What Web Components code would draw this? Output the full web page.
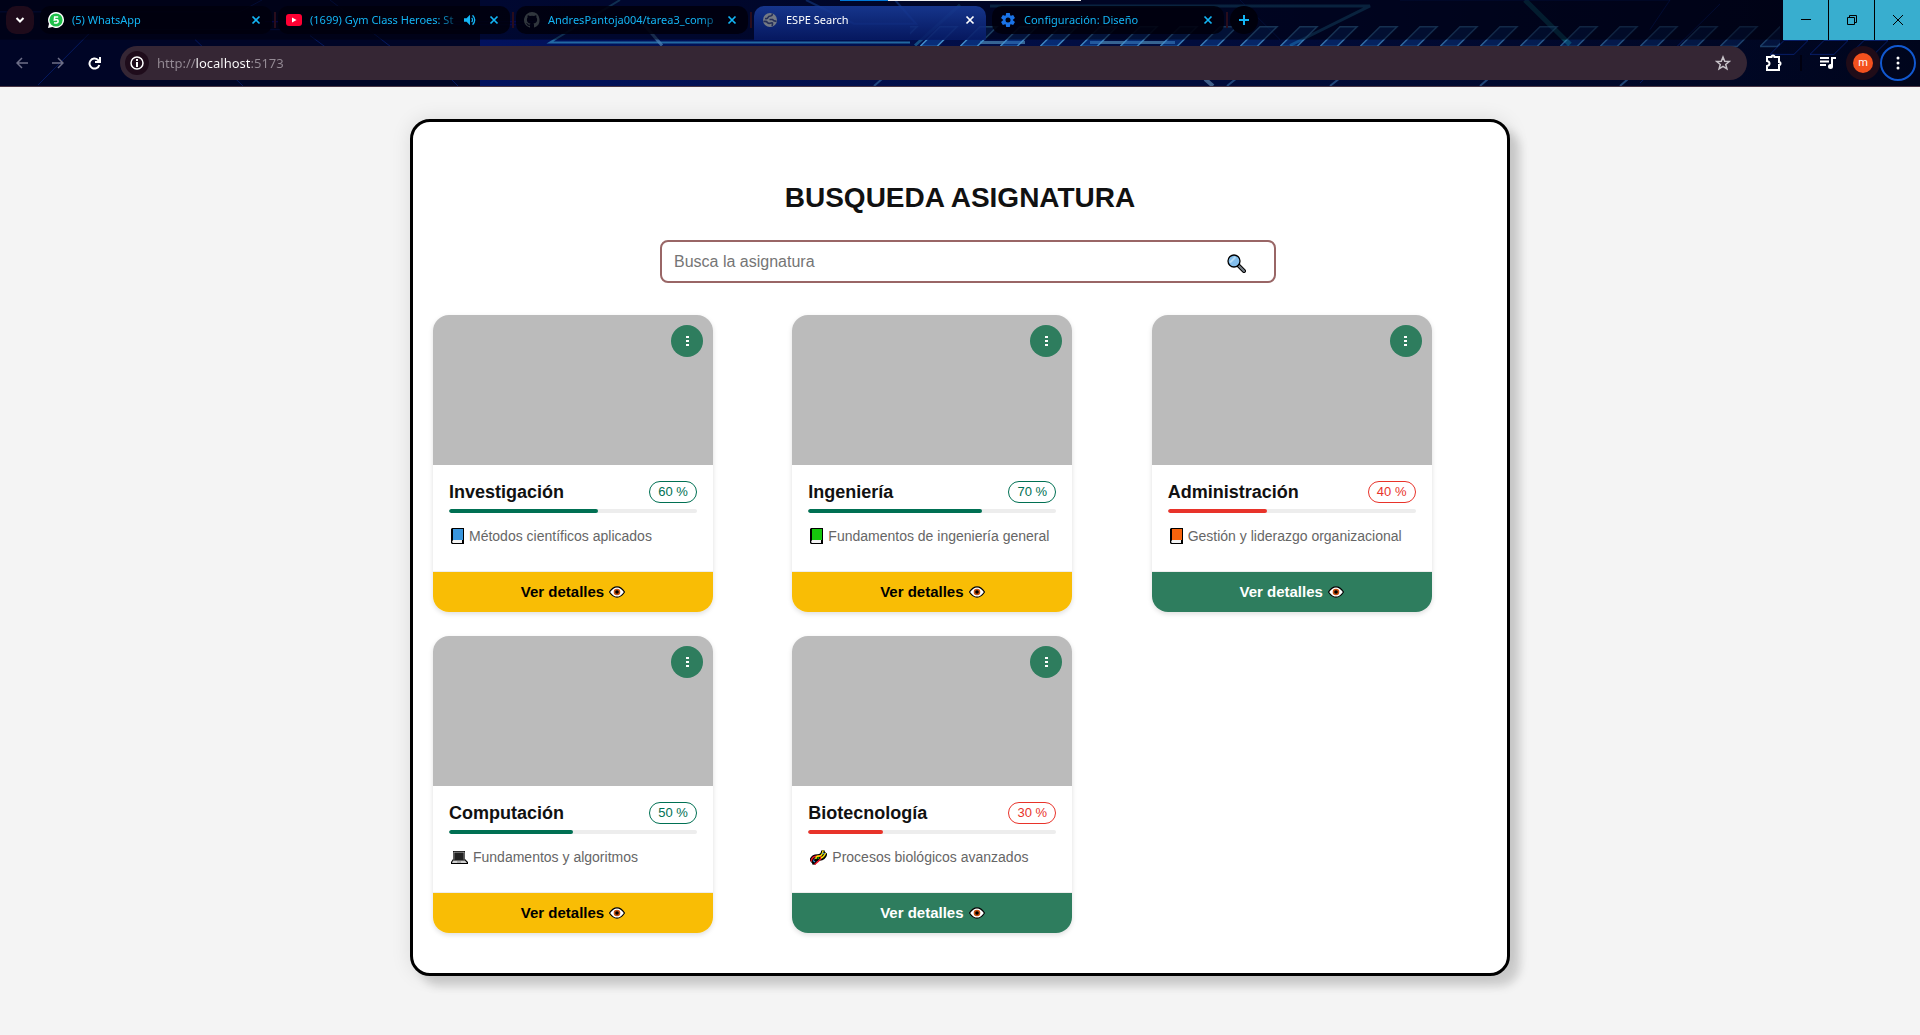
<!DOCTYPE html>
<html lang="es">
<head>
<meta charset="utf-8">
<title>ESPE Search</title>
<style>
  html, body { margin: 0; height: 100%; }
  body { display: flex; flex-direction: column; background: #f4f4f4; font-family: "Liberation Sans", Arial, sans-serif; }
</style>
</head>
<body>
<browser-bar>
  <browser-tab slot="tabs" label="(5) WhatsApp">
    <svg slot="icon" width="16" height="16" viewBox="0 0 16 16"><path d="M8 0a8 8 0 1 1-3.700 15.100L0 16l1-4.200A8 8 0 0 1 8 0z" fill="#fff"/><circle cx="8" cy="8" r="6.600" fill="#1fc04b"/><path d="M10.200 5H6.700L6.400 8q3.700-1 3.700 1.300T6 10.700" fill="none" stroke="#fff" stroke-width="1.600"/></svg>
  </browser-tab>
  <browser-tab slot="tabs" label="(1699) Gym Class Heroes: St" audio>
    <svg slot="icon" width="16" height="16" viewBox="0 0 16 16"><rect y="2" width="16" height="12" rx="3" fill="#ff0033"/><path d="M6 5.400v5.200L10.600 8z" fill="#fff"/></svg>
  </browser-tab>
  <browser-tab slot="tabs" label="AndresPantoja004/tarea3_comp">
    <svg slot="icon" width="16" height="16" viewBox="0 0 16 16"><path fill="#30363d" d="M8 0a8 8 0 0 0-2.500 15.600c.4.100.5-.2.500-.4v-1.500c-2.200.5-2.700-1-2.700-1-.4-.9-.9-1.200-.9-1.200-.7-.5.100-.5.100-.5.800.1 1.200.8 1.200.8.700 1.300 1.900.9 2.300.7.100-.5.300-.9.500-1.100-1.800-.2-3.600-.9-3.600-4 0-.9.300-1.600.8-2.100-.1-.2-.4-1 .1-2.100 0 0 .7-.2 2.200.8a7.500 7.500 0 0 1 4 0c1.500-1 2.200-.8 2.200-.8.400 1.100.2 1.900.1 2.100.5.600.8 1.300.8 2.100 0 3.100-1.900 3.700-3.700 3.900.3.300.6.800.6 1.500v2.200c0 .2.100.5.500.4A8 8 0 0 0 8 0z"/></svg>
  </browser-tab>
  <browser-tab slot="tabs" label="ESPE Search" active>
    <svg slot="icon" width="16" height="16" viewBox="0 0 16 16"><circle cx="8" cy="8" r="7" fill="#747a85"/><path d="M3 6.500q2.500.5 3-1t2.500-1.500q2.500-.5 1.500-2.500" fill="none" stroke="#252f58" stroke-width="1.600"/><path d="M1.500 9.500q3-.5 4 1t3.500.5 1 3M7.500 7.500h3q1.500 2 4 1.500" fill="none" stroke="#252f58" stroke-width="1.600"/></svg>
  </browser-tab>
  <browser-tab slot="tabs" label="Configuración: Diseño">
    <svg slot="icon" width="16" height="16" viewBox="0 0 16 16"><g fill="#1a73e8"><circle cx="8" cy="8" r="5"/><path d="M6.200 1h3.600l.6 3H5.600zM6.200 15h3.600l.6-3H5.600z"/><path d="M6.200 1h3.600l.6 3H5.600zM6.200 15h3.600l.6-3H5.600z" transform="rotate(60 8 8)"/><path d="M6.200 1h3.600l.6 3H5.600zM6.200 15h3.600l.6-3H5.600z" transform="rotate(120 8 8)"/></g><circle cx="8" cy="8" r="2.500" fill="#00020f"/></svg>
  </browser-tab>
</browser-bar>

<search-panel heading="BUSQUEDA ASIGNATURA">
  <subject-card percent="60" icon="book" style="--book:#3a96dd">
    <span slot="title">Investigación</span>Métodos científicos aplicados
  </subject-card>
  <subject-card percent="70" icon="book" style="--book:#16c60c">
    <span slot="title">Ingeniería</span>Fundamentos de ingeniería general
  </subject-card>
  <subject-card percent="40" icon="book" style="--book:#f7630c" low>
    <span slot="title">Administración</span>Gestión y liderazgo organizacional
  </subject-card>
  <subject-card percent="50" icon="laptop">
    <span slot="title">Computación</span>Fundamentos y algoritmos
  </subject-card>
  <subject-card percent="30" icon="dna" low>
    <span slot="title">Biotecnología</span>Procesos biológicos avanzados
  </subject-card>
</search-panel>

<template id="backdrop-tpl">
  <style>
    :host { display: block; position: absolute; inset: 0; z-index: -1; overflow: hidden; background: #010726; }
    svg { display: block; width: 100%; height: 100%; }
  </style>
  <svg viewBox="0 0 1920 87" preserveAspectRatio="none" aria-hidden="true">
    <defs>
      <pattern id="slats" width="40" height="87" patternUnits="userSpaceOnUse">
        <path d="M0 47L20 27H37L17 47z" fill="#0d4dab" fill-opacity=".5" stroke="#4290cc" stroke-width="1.500"/>
      </pattern>
      <linearGradient id="fade"><stop offset="0" stop-color="#02125e"/><stop offset=".5" stop-color="#010c3c"/><stop offset="1" stop-color="#00051c"/></linearGradient>
      <linearGradient id="glow"><stop offset="0" stop-color="#fff"/><stop offset=".45" stop-color="#bbb"/><stop offset="1" stop-color="#444"/></linearGradient>
      <mask id="dim"><rect x="900" width="1020" height="87" fill="url(#glow)"/></mask>
    </defs>
    <rect width="480" height="87" fill="#000526"/>
    <rect x="480" width="1440" height="87" fill="url(#fade)"/>
    <g fill="none" stroke="#0b2f9a">
      <path d="M0 12H240L262 0M75 30H500M38 86L95 28M195 40l48 47M310 36l40 30H437l22 22M330 0l90 70" opacity=".5"/>
      <path d="M265 22H560M300 25H640" stroke="#1414d0" opacity=".8"/>
      <path d="M620 0L550 43H910" stroke="#2a7fb5" stroke-width="2" opacity=".8"/>
      <path d="M640 20l22 26" stroke="#4b84b8" stroke-width="3" opacity=".7"/>
      <path d="M806 0l48 24h62L895 0" stroke="#1850c0" stroke-width="2"/>
      <path d="M960 5L915 46M990 6h380L1290 46" stroke="#278fbe" stroke-width="3" opacity=".5"/>
      <path d="M1090 43h85M980 43h45" stroke="#4d89b5" stroke-width="3" opacity=".7"/>
      <path d="M1205 80l8 7" stroke="#5b83ad" stroke-width="4" opacity=".7"/>
      <path d="M1237 79l-10 8M1340 79l-10 8M882 80l-8 7M1488 80l-8 7M1628 80l-8 7" stroke="#2d5f96" stroke-width="2" opacity=".7"/>
      <path d="M1525 0l45 45" stroke="#0f8a90" stroke-width="5" opacity=".45"/>
      <path d="M1240 0l40 40M1400 0h270l-20 30M1720 4l-80 80" opacity=".5"/>
      <path d="M1770 55l14-14h24l-14 14zM1810 55l14-14h24l-14 14zM1850 55l14-14h24l-14 14z" opacity=".6"/>
    </g>
    <rect x="910" width="870" height="87" fill="url(#slats)" mask="url(#dim)"/>
    <rect width="1920" height="40" fill="#00000c" opacity=".55"/>
  </svg>
</template>

<template id="tab-tpl">
  <style>
    :host { display: flex; flex: 0 1 238px; min-width: 0; box-sizing: border-box; height: 34px; padding-right: 2px; gap: 2px; color: #13b5f5; }
    .tab { flex: 1; min-width: 0; display: flex; align-items: center; box-sizing: border-box; height: 28px; padding: 0 10px 0 8px; border-radius: 10px; background: rgba(0,0,12,.88); }
    .sep { width: 2px; height: 16px; margin-top: 6px; background: #2a0d1c; flex: none; }
    button { font: 11px/16px "Noto Sans", "Open Sans", sans-serif; color: inherit; background: none; border: 0; padding: 0; }
    .title { flex: 1; min-width: 0; text-align: left; overflow: hidden; white-space: nowrap; margin: 0 2px 0 8px;
      -webkit-mask: linear-gradient(90deg, #000 calc(100% - 24px), transparent); mask: linear-gradient(90deg, #000 calc(100% - 24px), transparent); }
    .icon-btn { display: flex; width: 12px; height: 16px; align-items: center; justify-content: center; flex: none; }
    .audio { display: none; margin-right: 12px; }
    :host([audio]) .audio { display: flex; }
    :host([active]) { color: #fff; }
    :host([active]) .tab { height: 34px; padding-bottom: 6px; border-radius: 10px 10px 0 0; background: linear-gradient(180deg, rgba(24,58,150,.9), rgba(7,28,108,.8)); }
    :host([active]) .sep { background: none; }
    ::slotted(svg) { flex: none; }
  </style>
  <div class="tab">
    <slot name="icon"></slot>
    <button class="title" role="tab"></button>
    <button class="icon-btn audio" aria-label="Silenciar"><svg width="12" height="14" viewBox="0 0 14 14"><path d="M0 5h3l4-4v12L3 9H0z" fill="currentColor"/><path d="M9 4.500q2 2.500 0 5M10 1.500q5 5.500 0 11" fill="none" stroke="currentColor" stroke-width="1.500"/></svg></button>
    <button class="icon-btn" aria-label="Cerrar"><svg width="10" height="10" viewBox="0 0 10 10"><path d="M1.500 1.500l7 7M8.500 1.500l-7 7" stroke="currentColor" stroke-width="1.700"/></svg></button>
  </div>
  <span class="sep"></span>
</template>

<template id="bar-tpl">
  <style>
    :host { display: flex; flex-direction: column; position: relative; z-index: 0; flex: none; height: 86px; border-bottom: 1px solid #4a3644; color: #fff; }
    button { border: 0; padding: 0; background: none; color: inherit; display: flex; align-items: center; justify-content: center; flex: none; }
    .strip { display: flex; height: 40px; box-sizing: border-box; }
    .tabs { display: flex; flex: 1; min-width: 0; padding: 6px 0 0 6px; }
    .down { width: 28px; height: 28px; border-radius: 10px; background: #1f0b1b; margin-right: 6px; }
    .plus { width: 28px; height: 28px; border-radius: 50%; background: #00000c; color: #13b5f5; }
    .win { display: flex; gap: 1px; background: #000; }
    .win button { width: 45px; height: 40px; background: #38aecf; color: #000; }
    .load { position: absolute; top: 0; left: 43.75%; width: 241px; height: 1px; background: linear-gradient(90deg, #0078d7 48px, #f0f0f0 48px); }
    .tools { display: flex; align-items: center; height: 46px; padding: 0 4px; }
    .nav { width: 36px; height: 34px; }
    .off { color: #6d6f88; }
    label { display: flex; align-items: center; flex: 1; min-width: 0; box-sizing: border-box; height: 34px; margin-left: 8px; padding: 0 16px 0 5px; border-radius: 17px; background: #352634; }
    .info { width: 24px; height: 24px; border-radius: 50%; background: #1f0c1b; }
    input { flex: 1; min-width: 0; border: 0; outline: 0; padding: 0; margin-left: 8px; font: 13px/20px "Noto Sans", "Open Sans", sans-serif;
      -webkit-text-fill-color: transparent; -webkit-background-clip: text; background-clip: text;
      background-image: linear-gradient(90deg, #958b95 39px, #fff 39px, #fff 93px, #958b95 93px); }
    .ext { display: flex; align-items: center; margin-left: 14px; }
    .bar { width: 2px; height: 16px; background: #000010; margin: 0 18px 0 15px; }
    .halo { width: 34px; height: 34px; border-radius: 50%; background: #200c18; margin-left: 10px; }
    .halo span { width: 20px; height: 20px; border-radius: 50%; background: #f4511e; font: 11px/20px Roboto, sans-serif; }
    .menu { box-sizing: border-box; width: 36px; height: 36px; border-radius: 50%; border: 2px solid #1158d0; }
  </style>
  <page-backdrop></page-backdrop>
  <div class="strip">
    <div class="tabs">
      <button class="down" aria-label="Buscar pestañas"><svg width="10" height="8" viewBox="0 0 10 8"><path d="M1.500 2L5 5.500 8.500 2" fill="none" stroke="#fff" stroke-width="2"/></svg></button>
      <slot name="tabs"></slot>
      <button class="plus" aria-label="Nueva pestaña"><svg width="10" height="10" viewBox="0 0 10 10"><path d="M5 0v10M0 5h10" stroke="currentColor" stroke-width="2"/></svg></button>
    </div>
    <div class="win">
      <button aria-label="Minimizar"><svg width="10" height="10"><path d="M0 4.500h10" stroke="#000"/></svg></button>
      <button aria-label="Restaurar"><svg width="10" height="10" fill="none" stroke="#000"><path d="M.5 2.500h7v7h-7zM2.500 2.500v-2h7v7h-2"/></svg></button>
      <button aria-label="Cerrar"><svg width="10" height="10"><path d="M0 0l10 10M10 0L0 10" stroke="#000"/></svg></button>
    </div>
    <div class="load"></div>
  </div>
  <div class="tools">
    <button class="nav off" aria-label="Atrás"><svg width="12" height="12" viewBox="0 0 12 12" fill="none" stroke="currentColor" stroke-width="1.500"><path d="M12 6H1M6 1L1 6l5 5"/></svg></button>
    <button class="nav off" aria-label="Adelante"><svg width="12" height="12" viewBox="0 0 12 12" fill="none" stroke="currentColor" stroke-width="1.500"><path d="M0 6h11M6 1l5 5-5 5"/></svg></button>
    <button class="nav" aria-label="Recargar"><svg width="13" height="13" viewBox="0 0 13 13" fill="none" stroke="currentColor" stroke-width="2"><path d="M11.300 8A5 5 0 1 1 10 3l1 1M12 0v5H7"/></svg></button>
    <label>
      <button class="info" aria-label="Información del sitio"><svg width="14" height="14" viewBox="0 0 14 14"><circle cx="7" cy="7" r="6" fill="none" stroke="#fff" stroke-width="1.500"/><path d="M7 3v2M7 6v5" stroke="#fff" stroke-width="2"/></svg></button>
      <input type="text" value="http://localhost:5173" aria-label="Dirección" spellcheck="false">
      <button aria-label="Favorito"><svg width="16" height="16" viewBox="0 0 16 16"><path d="M8 2l1.700 4.200 4.500.3-3.500 2.900 1.200 4.400L8 11.300l-3.900 2.500 1.200-4.400L1.800 6.500l4.500-.3z" fill="none" stroke="#c7c2c8" stroke-width="1.500"/></svg></button>
    </label>
    <div class="ext">
      <button aria-label="Extensiones"><svg width="24" height="20" viewBox="0 0 24 20"><path d="M6 4h4.500q0-1.500 1.500-1.500T13.500 4H18v5q1.500 0 1.500 1.500T18 12v5H6v-4q2.500-.5 2.500-2.500T6 8z" fill="none" stroke="#fff" stroke-width="2"/></svg></button>
      <span class="bar"></span>
      <button aria-label="Multimedia"><svg width="16" height="14" viewBox="0 0 16 14"><path d="M0 2h9M0 5.500h9M0 9h6M12 11V2h4" fill="none" stroke="#fff" stroke-width="2"/><circle cx="10.500" cy="10.500" r="2.500" fill="#fff"/></svg></button>
      <button class="halo" aria-label="Perfil"><span>m</span></button>
      <button class="menu" aria-label="Menú"><svg width="4" height="14" viewBox="0 0 4 14" fill="#fff"><circle cx="2" cy="2" r="1.500"/><circle cx="2" cy="7" r="1.500"/><circle cx="2" cy="12" r="1.500"/></svg></button>
    </div>
  </div>
</template>

<template id="panel-tpl">
  <style>
    :host { display: block; flex: 1; padding: 32px 16px 56px; }
    main { box-sizing: border-box; max-width: 1100px; margin: 0 auto; padding: 40px 20px; border: 3px solid #000; border-radius: 20px; background: #fff; box-shadow: 10px 10px 10px rgba(0,0,0,.15), 0 0 20px rgba(0,0,0,.1); }
    h1 { margin: 20px 0 26px; font-size: 28px; line-height: 32px; text-align: center; color: #111; }
    form { position: relative; max-width: 600px; margin: 0 auto 32px; height: 43px; }
    input { box-sizing: border-box; width: calc(100% + 16px); height: 43px; padding: 0 44px 0 12px; border: 2px solid #966; border-radius: 8px; font: 16px "Liberation Sans", Arial, sans-serif; background: #fff; outline: 0; }
    input::placeholder { color: #757575; }
    form button { position: absolute; right: 14px; top: 14px; border: 0; padding: 0; background: none; display: flex; }
    .grid { display: grid; grid-template-columns: repeat(3, minmax(0, 1fr)); gap: 24px; justify-items: start; }
    @media (max-width: 980px) { .grid { grid-template-columns: repeat(auto-fill, minmax(280px, 1fr)); } }
  </style>
  <main>
    <h1></h1>
    <form role="search" onsubmit="return false">
      <input type="text" placeholder="Busca la asignatura" aria-label="Busca la asignatura">
      <button aria-label="Buscar"><svg width="19" height="19" viewBox="0 0 19 19"><path d="M11 11l6 6" stroke="#000" stroke-width="4" stroke-linecap="round"/><path d="M12 12l5 5" stroke="#767f88" stroke-width="2" stroke-linecap="round"/><circle cx="7" cy="7" r="6" fill="#83beec" stroke="#000" stroke-width="1.300"/><path d="M3 8.500L8.500 3" stroke="#b6dcf6" stroke-width="2"/></svg></button>
    </form>
    <div class="grid"><slot></slot></div>
  </main>
</template>

<template id="card-tpl">
  <style>
    :host { display: block; position: relative; width: 100%; max-width: 280px; border-radius: 16px; overflow: hidden; background: #fff; box-shadow: 0 2px 5px rgba(0,0,0,.13); --tone: #007053; --foot: #f9bd05; --ink: #000; }
    :host([low]) { --tone: #e8332a; --foot: #2e7d5e; --ink: #fff; }
    .media { height: 150px; background: #bbb; }
    .more { position: absolute; top: 10px; right: 10px; width: 32px; height: 32px; border: 0; border-radius: 50%; padding: 0; background: #2e7d5e; display: flex; align-items: center; justify-content: center; }
    .body { padding: 16px 16px 24px; }
    .row { display: flex; align-items: center; justify-content: space-between; height: 22px; }
    h2 { margin: 0; font-size: 18px; line-height: 22px; color: #111; }
    .pill { box-sizing: border-box; min-width: 48px; height: 22px; padding: 0 8px; border: 1px solid var(--tone); border-radius: 11px; font-size: 13px; line-height: 20px; text-align: center; color: var(--tone); }
    progress { display: block; width: 100%; height: 4px; margin: 6px 0 12px; border: 0; border-radius: 2px; overflow: hidden; background: #ededed; appearance: none; -webkit-appearance: none; }
    progress::-webkit-progress-bar { background: #ededed; }
    progress::-webkit-progress-value { background: var(--tone); border-radius: 2px; }
    p { margin: 0; display: flex; align-items: center; gap: 5px; height: 22px; padding-left: 2px; font-size: 14px; line-height: 22px; color: #666; white-space: nowrap; }
    .ico { display: flex; }
    .foot { display: flex; align-items: center; justify-content: center; gap: 5px; width: 100%; height: 41px; padding: 0; border: 0; border-top: 1px solid #eee; background: var(--foot); background-clip: padding-box; color: var(--ink); font: bold 15px/20px "Liberation Sans", Arial, sans-serif; }
    svg { flex: none; }
  </style>
  <div class="media"></div>
  <button class="more" aria-label="Más opciones"><svg width="3" height="10" fill="#fff"><path d="M0 0h3v2H0zM0 4h3v2H0zM0 8h3v2H0z"/></svg></button>
  <div class="body">
    <div class="row"><h2><slot name="title"></slot></h2><span class="pill"></span></div>
    <progress max="100" aria-label="Avance"></progress>
    <p><span class="ico"></span><span><slot></slot></span></p>
  </div>
  <button class="foot">Ver detalles <svg width="16" height="12" viewBox="0 0 16 12"><path d="M.5 6Q4 .8 8 .8T15.500 6Q12 11.200 8 11.200T.5 6z" fill="#fff" stroke="#000" stroke-width="1.200"/><circle cx="8" cy="6" r="3.300" fill="#ca5010"/><circle cx="8" cy="6" r="1.800" fill="#000"/></svg></button>
</template>

<script>
  const stamp = (host, id) => {
    const root = host.attachShadow({ mode: 'open' });
    root.append(document.getElementById(id).content.cloneNode(true));
    return root;
  };

  const icons = {
    book: '<svg width="13" height="16" viewBox="0 0 13 16"><path d="M1 0h12v16H1L0 15V1z" fill="#000"/><path d="M2 1h10v11H2z" fill="var(--book)"/><path d="M2 12h9v3H2l-1-1z" fill="#f3f3f3"/></svg>',
    laptop: '<svg width="17" height="13" viewBox="0 0 17 13"><path d="M2 0h12v8l3 3v2H0v-2l2-3z" fill="#000"/><path d="M2.500 .8h11v8h-11z" fill="#bbb"/><path d="M3.300 1.500h9.400v7.500H3.300z" fill="#222"/><path d="M2 9.500h12l2 2.500H1z" fill="#d0d0d0"/><path d="M6 10.500h4v1H6z" fill="#888"/></svg>',
    dna: '<svg width="17" height="17" viewBox="0 0 17 17" fill="none"><path d="M1 12.500Q2 7 7.500 7T13 1.500M4 15.500Q4 10.500 9.500 10T15.500 4" stroke="#000" stroke-width="3.600"/><path d="M2 12l3 2.500M12 2.500l3 2.500M6 8l4 2" stroke="#000" stroke-width="3"/><path d="M1 12.500Q2 7 7.500 7t3 3-6 5.500" stroke="#e81224" stroke-width="1.500"/><path d="M13 1.500Q12.500 7 9 7t-3 3M15.500 4Q14 8 11 9" stroke="#fce100" stroke-width="1.500"/><path d="M3 11.500l2 1.500M12.500 4l2 1" stroke="#3a96dd" stroke-width="1.300"/><path d="M7.500 8.500l1.500 1" stroke="#16c60c" stroke-width="1.500"/></svg>'
  };

  customElements.define('page-backdrop', class extends HTMLElement {
    constructor() { super(); stamp(this, 'backdrop-tpl'); }
  });

  customElements.define('browser-tab', class extends HTMLElement {
    constructor() {
      super();
      stamp(this, 'tab-tpl').querySelector('.title').textContent = this.getAttribute('label');
    }
  });

  customElements.define('browser-bar', class extends HTMLElement {
    constructor() { super(); stamp(this, 'bar-tpl'); }
  });

  customElements.define('search-panel', class extends HTMLElement {
    constructor() {
      super();
      stamp(this, 'panel-tpl').querySelector('h1').textContent = this.getAttribute('heading');
    }
  });

  customElements.define('subject-card', class extends HTMLElement {
    constructor() {
      super();
      const root = stamp(this, 'card-tpl');
      const percent = this.getAttribute('percent');
      root.querySelector('.pill').textContent = percent + ' %';
      root.querySelector('progress').value = percent;
      root.querySelector('.ico').innerHTML = icons[this.getAttribute('icon')];
    }
  });
</script>
</body>
</html>
